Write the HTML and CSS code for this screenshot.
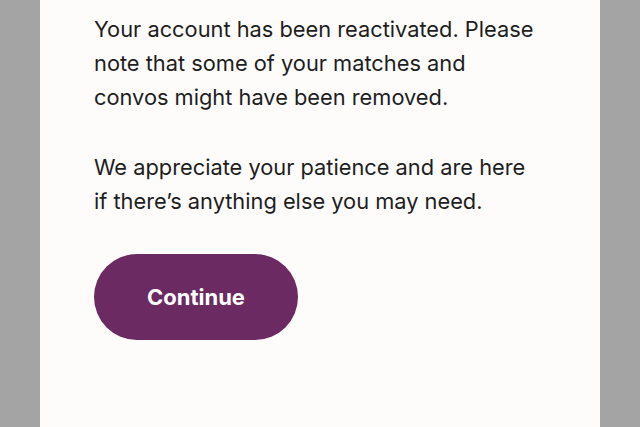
FILE: index.html
```html
<!DOCTYPE html>
<html>
<head>
<meta charset="utf-8">
<title>Account reactivated</title>
<link rel="stylesheet" href="styles.css">
</head>
<body>
<div class="sheet">
  <p class="message">
    Your account has been reactivated. Please<br>
    note that some of your matches and<br>
    convos might have been removed.
  </p>
  <p class="message">
    We appreciate your patience and are here<br>
    if there’s anything else you may need.
  </p>
  <button class="continue-btn" type="button">Continue</button>
</div>
</body>
</html>
```

FILE: styles.css
```css
html, body {
  margin: 0;
  height: 100%;
}
body {
  background: #a4a4a4;
  font-family: "Inter", "Noto Sans", sans-serif;
}
.sheet {
  box-sizing: border-box;
  width: 560px;
  min-height: 100%;
  margin: 0 auto;
  padding: 12px 40px 0 54px;
  background: #fdfcfb;
}
.message {
  margin: 0 0 36px 0;
  font-size: 21.8px;
  line-height: 34px;
  color: #1e1e1e;
  white-space: nowrap;
}
.continue-btn {
  display: block;
  margin-top: 23px;
  width: 204px;
  height: 86px;
  border: none;
  border-radius: 43px;
  background: #6b2a62;
  color: #ffffff;
  font-family: "Inter", "Noto Sans", sans-serif;
  font-weight: 700;
  font-size: 22px;
}
```
